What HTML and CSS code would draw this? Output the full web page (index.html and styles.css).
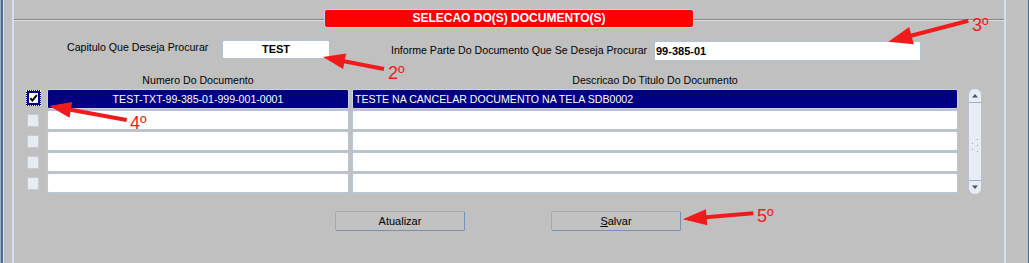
FILE: index.html
```html
<!DOCTYPE html>
<html lang="pt">
<head>
<meta charset="utf-8">
<title>Selecao Do(s) Documento(s)</title>
<link rel="stylesheet" href="styles.css">
</head>
<body>
<div class="window">
  <div class="edge-left"></div>
  <div class="canvas">
    <div class="panel">
      <div class="frame-head">
        <div class="rule"></div>
        <div class="title">SELECAO DO(S) DOCUMENTO(S)</div>
        <div class="rule"></div>
      </div>
      <div class="search">
        <div class="lbl lbl-cap">Capitulo Que Deseja Procurar</div>
        <div class="field field-cap">TEST</div>
        <div class="lbl lbl-doc">Informe Parte Do Documento Que Se Deseja Procurar</div>
        <div class="field field-doc">99-385-01</div>
      </div>
      <div class="grid">
        <div class="hdr"></div>
        <div class="hdr">Numero Do Documento</div>
        <div class="hdr">Descricao Do Titulo Do Documento</div>
        <div class="hdr"></div>

        <div class="cb cb-focus"><span class="cb-inner"><svg width="9" height="10" viewBox="0 0 9 10"><path d="M1.3 5.2 L3.4 7.6 L7.8 2.2" fill="none" stroke="#000" stroke-width="1.9"/></svg></span></div>
        <div class="cell c1 sel">TEST-TXT-99-385-01-999-001-0001</div>
        <div class="cell c2 sel">TESTE NA CANCELAR DOCUMENTO NA TELA SDB0002</div>
        <div class="scrollbar">
          <svg width="14" height="107" viewBox="0 0 14 107">
            <rect x="0.5" y="0.5" width="13" height="106" rx="6.5" fill="#e8ecf4" stroke="#b7c3d3"/>
            <line x1="1" y1="14.5" x2="13" y2="14.5" stroke="#9fb0c4"/>
            <line x1="1" y1="92.5" x2="13" y2="92.5" stroke="#9fb0c4"/>
            <polygon points="4,9.5 10,9.5 7,6" fill="#4a5566"/>
            <polygon points="4,97.5 10,97.5 7,101" fill="#4a5566"/>
            <g stroke="#8ea0b8" stroke-width="1">
              <line x1="9" y1="52" x2="10" y2="51"/>
              <line x1="4" y1="56" x2="5" y2="55"/>
              <line x1="9" y1="58" x2="10" y2="57"/>
              <line x1="4" y1="62" x2="5" y2="61"/>
              <line x1="9" y1="64" x2="10" y2="63"/>
            </g>
          </svg>
        </div>

        <div class="cb"></div>
        <div class="cell c1"></div>
        <div class="cell c2"></div>

        <div class="cb"></div>
        <div class="cell c1"></div>
        <div class="cell c2"></div>

        <div class="cb"></div>
        <div class="cell c1"></div>
        <div class="cell c2"></div>

        <div class="cb"></div>
        <div class="cell c1"></div>
        <div class="cell c2"></div>
      </div>
      <div class="buttons">
        <button class="btn" type="button">Atualizar</button>
        <button class="btn" type="button"><span class="mnemonic">S</span>alvar</button>
      </div>
    </div>
  </div>
  <div class="edge-right"></div>
</div>

<svg class="annotations" width="1029" height="263" viewBox="0 0 1029 263">
  <g fill="#f21b1b" stroke="none">
    <line x1="384" y1="69" x2="344" y2="61.2" stroke="#f21b1b" stroke-width="4"/>
    <polygon points="323,57 346.1,53.4 343.1,69.1"/>
    <line x1="968.3" y1="20.7" x2="911" y2="35.7" stroke="#f21b1b" stroke-width="4"/>
    <polygon points="888.3,41.7 909.2,26.9 913.8,44.3"/>
    <line x1="126.7" y1="120" x2="70.5" y2="109.8" stroke="#f21b1b" stroke-width="4"/>
    <polygon points="49.3,106 72.3,102 69.5,117.8"/>
    <line x1="753.3" y1="213.3" x2="706" y2="217.3" stroke="#f21b1b" stroke-width="4"/>
    <polygon points="682.7,219.3 705.9,209.3 707.3,225.3"/>
  </g>
  <g class="note">
    <text x="388" y="79">2º</text>
    <text x="972" y="31">3º</text>
    <text x="130" y="129">4º</text>
    <text x="757" y="222">5º</text>
  </g>
</svg>
</body>
</html>
```

FILE: styles.css
```css
html, body {
  margin: 0;
  padding: 0;
}

body {
  width: 1029px;
  height: 263px;
  overflow: hidden;
  position: relative;
  background: #c0c0c0;
  font-family: "Liberation Sans", Arial, sans-serif;
  color: #000;
}

.window {
  display: flex;
  height: 263px;
}

.edge-left {
  flex: none;
  width: 5px;
  background: linear-gradient(to right, #9aabc4 0 1px, #4d6b9b 1px 3px, #dfe4ec 3px 4px, #b9b9b9 4px 5px);
}

.edge-right {
  flex: none;
  width: 1px;
  background: #4d6b9b;
}

.canvas {
  flex: 1;
  display: flex;
  padding-left: 7px;
  background: #c0c0c0;
}

.panel {
  width: 990px;
  border-left: 2px solid #d2e1f0;
  border-right: 2px solid #d2e1f0;
}

.frame-head {
  display: flex;
  height: 19px;
  margin-top: 9px;
}

.rule {
  flex: 1;
  height: 0;
  margin-top: 10px;
  border-top: 1px solid #858585;
  border-bottom: 1px solid #dedede;
}

.title {
  flex: none;
  width: 370px;
  height: 19px;
  box-sizing: border-box;
  background: #ff0000;
  border: 1px solid #c9d6e6;
  border-radius: 3px;
  color: #fff;
  font-weight: bold;
  font-size: 12px;
  line-height: 17px;
  text-align: center;
}

.search {
  display: flex;
  align-items: flex-start;
  height: 21px;
  margin-top: 12px;
  padding-left: 53px;
}

.lbl {
  flex: none;
  font-size: 10.6px;
  line-height: 13px;
  white-space: nowrap;
}

.lbl-cap {
  width: 155px;
  margin-top: 1px;
}

.lbl-doc {
  width: 263px;
  margin-left: 61px;
  margin-top: 4px;
}

.field {
  flex: none;
  box-sizing: border-box;
  background: #fff;
  border: 1px solid #b3c3d8;
  border-radius: 2px;
  font-weight: bold;
  font-size: 11px;
}

.field-cap {
  width: 108px;
  height: 19px;
  line-height: 17px;
  text-align: center;
}

.field-doc {
  width: 267px;
  height: 20px;
  margin-top: 1px;
  line-height: 18px;
  padding-left: 1px;
}

.grid {
  display: grid;
  grid-template-columns: 20px 302px 606px 21px;
  grid-template-rows: 14px repeat(5, 20px);
  column-gap: 3px;
  row-gap: 1px;
  margin-top: 13px;
  margin-left: 10px;
}

.hdr {
  font-size: 10.6px;
  line-height: 13px;
  text-align: center;
  white-space: nowrap;
}

.cb {
  align-self: center;
  justify-self: start;
  width: 12px;
  height: 13px;
  margin-left: 3px;
  box-sizing: border-box;
  background: #e7ebf2;
  border: 1px solid #c5cad3;
  border-radius: 1px;
}

.cb-focus {
  width: 15px;
  height: 16px;
  margin-left: 2px;
  margin-top: -2px;
  background: #000080;
  border: 1px dotted #ffffff;
  border-radius: 0;
  display: flex;
  align-items: center;
  justify-content: center;
}

.cb-inner {
  display: flex;
  width: 9px;
  height: 10px;
  background: #fff;
}

.cell {
  box-sizing: border-box;
  background: #fff;
  border: 1px solid #b8c6d8;
  border-radius: 2px;
  font-size: 10.6px;
  line-height: 18px;
  white-space: nowrap;
  overflow: hidden;
}

.cell.sel {
  background: #000080;
  color: #fff;
  border-color: #c9d4e4;
}

.c1 {
  text-align: center;
}

.c2 {
  padding-left: 2px;
}

.scrollbar {
  grid-column: 4;
  grid-row: 2 / span 5;
  justify-self: end;
  width: 14px;
  margin-top: -1px;
  margin-bottom: -2px;
}

.scrollbar svg {
  display: block;
}

.buttons {
  display: flex;
  gap: 86px;
  margin-top: 18px;
  padding-left: 321px;
}

.btn {
  width: 130px;
  height: 20px;
  box-sizing: border-box;
  padding: 0;
  margin: 0;
  border: 1px solid;
  border-color: #a8a8a8 #7590b4 #7590b4 #a8a8a8;
  border-radius: 2px;
  background: #c2c2c2;
  font-family: "Liberation Sans", Arial, sans-serif;
  font-size: 11px;
  line-height: 18px;
  color: #000;
  text-align: center;
}

.mnemonic {
  text-decoration: underline;
}

.annotations {
  position: absolute;
  left: 0;
  top: 0;
  pointer-events: none;
}

.note text {
  fill: #f21b1b;
  font-family: "Liberation Sans", Arial, sans-serif;
  font-size: 18px;
}
```
